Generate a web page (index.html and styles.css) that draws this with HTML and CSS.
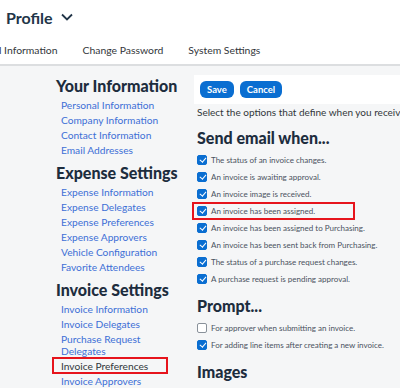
FILE: index.html
```html
<!DOCTYPE html>
<html lang="en">
<head>
  <meta charset="UTF-8">
  <title>Profile - Invoice Preferences</title>
  <link rel="stylesheet" href="styles.css">
</head>
<body>
  <header class="header">
    <div class="profile">Profile
      <svg class="chev" width="12" height="8" viewBox="0 0 12 8"><path d="M1 1.5 L6 6.5 L11 1.5" fill="none" stroke="#223548" stroke-width="1.8"/></svg>
    </div>
    <nav class="tabs">
      <span class="tab first">l Information</span>
      <span class="tab">Change Password</span>
      <span class="tab">System Settings</span>
    </nav>
  </header>

  <div class="main">
    <aside class="side">
      <h2>Your Information</h2>
      <a>Personal Information</a>
      <a>Company Information</a>
      <a>Contact Information</a>
      <a>Email Addresses</a>

      <h2>Expense Settings</h2>
      <a>Expense Information</a>
      <a>Expense Delegates</a>
      <a>Expense Preferences</a>
      <a>Expense Approvers</a>
      <a>Vehicle Configuration</a>
      <a>Favorite Attendees</a>

      <h2>Invoice Settings</h2>
      <a>Invoice Information</a>
      <a>Invoice Delegates</a>
      <a class="wrap">Purchase Request Delegates</a>
      <a class="current marked">Invoice Preferences</a>
      <a>Invoice Approvers</a>
    </aside>

    <section class="content">
      <div class="toolbar">
        <button class="btn">Save</button>
        <button class="btn">Cancel</button>
      </div>
      <p class="intro">Select the options that define when you receive email notifications.</p>

      <h2>Send email when...</h2>
      <div class="opts">
        <label class="opt"><span class="cb on"></span>The status of an invoice changes.</label>
        <label class="opt"><span class="cb on"></span>An invoice is awaiting approval.</label>
        <label class="opt"><span class="cb on"></span>An invoice image is received.</label>
        <label class="opt marked"><span class="cb on"></span>An invoice has been assigned.</label>
        <label class="opt"><span class="cb on"></span>An invoice has been assigned to Purchasing.</label>
        <label class="opt"><span class="cb on"></span>An invoice has been sent back from Purchasing.</label>
        <label class="opt"><span class="cb on"></span>The status of a purchase request changes.</label>
        <label class="opt"><span class="cb on"></span>A purchase request is pending approval.</label>
      </div>

      <h2>Prompt...</h2>
      <div class="opts">
        <label class="opt"><span class="cb"></span>For approver when submitting an invoice.</label>
        <label class="opt"><span class="cb on"></span>For adding line items after creating a new invoice.</label>
      </div>

      <h2>Images</h2>
    </section>
  </div>
</body>
</html>
```

FILE: styles.css
```css
html, body {
  margin: 0;
  padding: 0;
  height: 100%;
  overflow: hidden;
}
body {
  font-family: Lato, "Liberation Sans", sans-serif;
  background-color: #f5f6f7;
  color: #32363a;
}
.header {
  background-color: white;
  height: 66px;
  border-bottom: 2px solid #dcdee0;
  box-sizing: border-box;
}
.profile {
  padding: 6px 0 0 6px;
  font-size: 16px;
  font-weight: 700;
  color: #223548;
  display: flex;
  align-items: center;
  gap: 8px;
  height: 22px;
}
.tabs {
  display: flex;
  gap: 25px;
  margin-top: 16px;
  font-size: 10.4px;
  color: #32363a;
  white-space: nowrap;
}
.tab.first {
  margin-left: -1px;
}
.main {
  display: flex;
}
.side {
  width: 138px;
  flex-shrink: 0;
  padding-left: 56px;
  display: flex;
  flex-direction: column;
  padding-top: 10px;
}
.side h2 {
  font-size: 16px;
  font-weight: 900;
  color: #1d2d3e;
  margin: 0 0 1px 0;
  line-height: 20px;
  white-space: nowrap;
}
.side a {
  font-size: 10.2px;
  line-height: 12px;
  padding: 1.5px 0;
  color: #3d6fd6;
  margin-left: 5px;
  width: 100px;
}
.side a + h2 {
  margin-top: 6px;
}
.side a.current {
  color: #32363a;
}
.marked {
  position: relative;
}
.marked::after {
  content: "";
  position: absolute;
  border: 2px solid #e6141c;
}
.side a.marked::after {
  left: -9px;
  width: 112px;
  top: -1px;
  bottom: -1px;
}
.content {
  flex: 1;
  min-width: 0;
  padding-top: 9px;
}
.toolbar {
  background-color: white;
  height: 29px;
  display: flex;
  align-items: center;
  gap: 6px;
  padding-left: 6px;
}
.btn {
  background-color: #0a6ed1;
  color: white;
  border: none;
  border-radius: 6px;
  font-family: inherit;
  font-size: 9.5px;
  font-weight: 700;
  height: 17px;
  padding: 0 7px;
}
.intro {
  margin: 2px 0 0 3px;
  font-size: 10px;
  line-height: 13px;
  white-space: nowrap;
  color: #32363a;
}
.content h2 {
  margin: 8px 0 2px 3px;
  font-size: 16px;
  font-weight: 900;
  color: #1d2d3e;
  line-height: 22px;
}
.opts {
  display: flex;
  flex-direction: column;
  margin-left: 3px;
}
.opts + h2 {
  margin-top: 8px;
}
.opt {
  display: flex;
  align-items: center;
  gap: 4px;
  font-size: 8px;
  color: #4a5260;
  height: 17px;
  white-space: nowrap;
}
.opt.marked::after {
  left: -5px;
  top: 0;
  width: 159px;
  bottom: -1px;
}
.cb {
  width: 10px;
  height: 10px;
  border: 1px solid #89919a;
  border-radius: 2px;
  background-color: white;
  box-sizing: border-box;
  flex-shrink: 0;
  position: relative;
}
.cb.on {
  background-color: #0a6ed1;
  border-color: #0a6ed1;
}
.cb.on::before {
  content: "";
  position: absolute;
  left: 2.5px;
  top: 0.5px;
  width: 2.5px;
  height: 5px;
  border: solid white;
  border-width: 0 1.5px 1.5px 0;
  transform: rotate(40deg);
}
```
